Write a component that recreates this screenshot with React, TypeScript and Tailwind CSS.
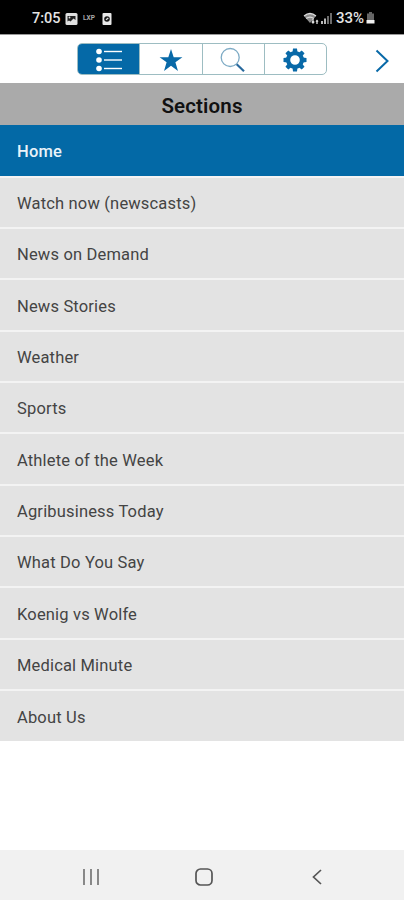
import { clsx } from "clsx";
import type { ReactNode } from "react";

const sections = [
  "Home",
  "Watch now (newscasts)",
  "News on Demand",
  "News Stories",
  "Weather",
  "Sports",
  "Athlete of the Week",
  "Agribusiness Today",
  "What Do You Say",
  "Koenig vs Wolfe",
  "Medical Minute",
  "About Us",
];

const GEAR_TEETH = [0, 45, 90, 135, 180, 225, 270, 315];

function StatusBar() {
  return (
    <header className="flex h-[34px] items-center justify-between bg-black pr-[29px] pl-8 text-[14.5px] font-medium text-[#e4e4e4]">
      <div className="flex items-center pt-[3px]">
        <span className="w-[29px] whitespace-nowrap">7:05</span>
        <svg className="ml-1" width="13" height="12" viewBox="0 0 13 12">
          <rect x="0.5" width="12" height="12" rx="1.5" fill="#e0e0e0" />
          <path d="M2.5 3h8v4L8.5 5.5 5.5 8.5l-1.5-1-1.5 1z" fill="#222" />
          <circle cx="4.5" cy="4.5" r="0.9" fill="#e0e0e0" />
        </svg>
        <span className="ml-[5px] w-3 text-[6.5px] leading-none font-bold text-[#aaa]">
          LXP
        </span>
        <svg className="ml-[7px]" width="10" height="12" viewBox="0 0 10 12">
          <rect x="0.5" width="9" height="12" rx="1" fill="#e8e8e8" />
          <circle cx="5" cy="6" r="2.8" fill="#161616" />
          <path d="M4 6.8 6.3 5" stroke="#e8e8e8" strokeWidth="1.2" />
        </svg>
      </div>
      <div className="flex items-center pt-0.5">
        <svg width="30" height="13" viewBox="0 0 30 13">
          <path d="M1 4Q7-1 13 4L7 11z" fill="#8c8c8c" />
          <path
            d="M1 4Q7-1 13 4M3.2 6.5Q7 3.7 10.8 6.5"
            fill="none"
            stroke="#ddd"
            strokeWidth="1.3"
          />
          <path
            d="M10 7v4M8.8 9.5 10 11l1.2-1.5M14 12V8.5M13 9.7l1-1.2 1 1.2"
            fill="none"
            stroke="#e0e0e0"
            strokeWidth="1.3"
          />
          <path d="M19 12V9M22 12V6.5" stroke="#ccc" strokeWidth="1.8" />
          <path d="M25 12V4M28 12V1" stroke="#777" strokeWidth="1.8" />
        </svg>
        <span className="ml-[3px] w-[30px] text-[15px] whitespace-nowrap">33%</span>
        <svg width="9" height="12" viewBox="0 0 9 12">
          <path d="M3 0h3v1.5h2V8H1V1.5h2z" fill="#666" />
          <path d="M0.5 8h8v3.5h-8z" fill="#f0f0f0" />
        </svg>
      </div>
    </header>
  );
}

function ListIcon() {
  return (
    <svg width="28" height="24" viewBox="0 0 28 24" fill="white">
      {[3.5, 12, 20.5].map((y) => (
        <g key={y}>
          <circle cx="4" cy={y} r="2.8" />
          <rect x="9" y={y - 0.7} width="18" height="1.4" />
        </g>
      ))}
    </svg>
  );
}

function StarIcon() {
  return (
    <svg width="24" height="24" viewBox="0 0 24 24" fill="#0869a8">
      <path d="M12 1 14.7 9.2H23.4L16.4 14.2 19 23 12 17.8 5 23 7.6 14.2.6 9.2H9.3z" />
    </svg>
  );
}

function SearchIcon() {
  return (
    <svg width="26" height="26" viewBox="0 0 26 26" fill="none">
      <circle cx="10.2" cy="10.5" r="9" stroke="#7eabc5" strokeWidth="1.3" />
      <path d="m16.7 17.2 7.3 7.1" stroke="#28699d" strokeWidth="2.2" />
    </svg>
  );
}

function GearIcon() {
  return (
    <svg width="24" height="24" viewBox="0 0 24 24">
      <circle cx="12" cy="12" r="6.9" fill="none" stroke="#0869a8" strokeWidth="4.2" />
      {GEAR_TEETH.map((angle) => (
        <path
          key={angle}
          d="M9.5 4.2 10 .5h4l.5 3.7z"
          fill="#0869a8"
          transform={`rotate(${angle} 12 12)`}
        />
      ))}
    </svg>
  );
}

function ToolbarTab({ children, active }: { children: ReactNode; active?: boolean }) {
  return (
    <button
      type="button"
      className={clsx(
        "flex flex-1 items-center justify-center border-r border-[#9dbdc2] pt-px last:border-r-0",
        active && "bg-[#0569a7]",
      )}
    >
      {children}
    </button>
  );
}

function Toolbar() {
  return (
    <nav className="flex h-[49px] items-center border-t border-[#999] bg-white pr-3.5 pl-[77px]">
      <div className="flex h-8 w-[250px] overflow-hidden rounded-[5px] border border-[#9dbdc2]">
        <ToolbarTab active>
          <ListIcon />
        </ToolbarTab>
        <ToolbarTab>
          <StarIcon />
        </ToolbarTab>
        <ToolbarTab>
          <SearchIcon />
        </ToolbarTab>
        <ToolbarTab>
          <GearIcon />
        </ToolbarTab>
      </div>
      <button type="button" className="mt-1 ml-auto">
        <svg width="15" height="24" viewBox="0 0 15 24" fill="none">
          <path d="M1.5 1.5 12.5 12 1.5 22.5" stroke="#0869a8" strokeWidth="2" />
        </svg>
      </button>
    </nav>
  );
}

function SectionList() {
  return (
    <ul>
      {sections.map((name, i) => (
        <li
          key={name}
          className={clsx(
            "flex h-[51.36px] items-center pl-[17px] text-[16.5px] tracking-[0.17px] first:h-[50.6px] last:h-[52.12px]",
            i === 0
              ? "bg-[#0369a6] pt-[5px] font-medium text-[#e9f3f9]"
              : "border-t-2 border-[#f3f3f3] bg-[#e3e3e3] pt-[3.8px] text-[#444]",
          )}
        >
          {name}
        </li>
      ))}
    </ul>
  );
}

function NavigationBar() {
  return (
    <footer className="mt-auto flex h-[50px] items-center bg-[#f1f1f1] pt-[3px] pl-[82px]">
      <svg width="18" height="18" viewBox="0 0 18 18">
        <path d="M2 1v16M9 1v16M16 1v16" stroke="#777" strokeWidth="1.7" />
      </svg>
      <svg className="ml-[95px]" width="18" height="18" viewBox="0 0 18 18" fill="none">
        <rect x="1" y="1" width="16" height="16" rx="4.5" stroke="#555" strokeWidth="1.7" />
      </svg>
      <svg className="ml-[98px]" width="12" height="18" viewBox="0 0 12 18" fill="none">
        <path d="M10 2 2.5 9 10 16" stroke="#555" strokeWidth="1.7" />
      </svg>
    </footer>
  );
}

export default function App() {
  return (
    <div className="flex h-screen flex-col bg-white font-['Roboto',sans-serif]">
      <StatusBar />
      <Toolbar />
      <h1 className="flex h-[42px] shrink-0 items-center justify-center bg-[#aaa] pt-1 text-[20.5px] font-semibold tracking-[0.15px] text-[#111]">
        Sections
      </h1>
      <SectionList />
      <NavigationBar />
    </div>
  );
}
